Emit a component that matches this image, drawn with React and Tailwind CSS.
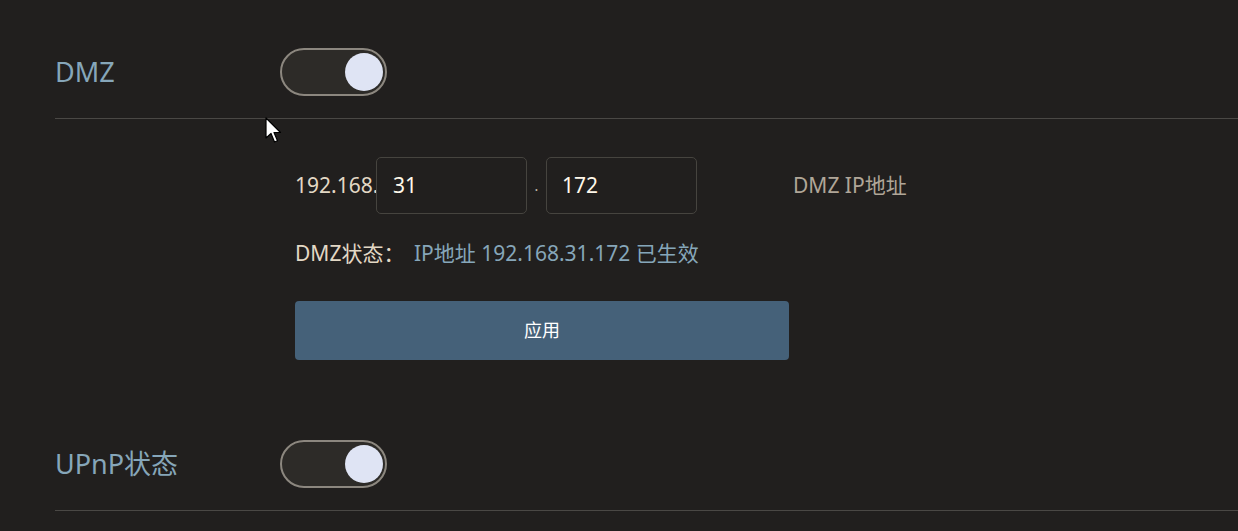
import React from "react";

const FONT = { fontFamily: '"Noto Sans", "Noto Sans CJK SC", sans-serif' };

function Toggle() {
  return (
    <div className="w-[107px] h-[48px] rounded-full border-2 border-[#8c877f] bg-[#2d2b28] flex items-center justify-end pr-[2px]">
      <div className="w-[38px] h-[38px] rounded-full bg-[#dfe4f4]" />
    </div>
  );
}

function SwitchRow({ label }) {
  return (
    <div className="flex items-center h-[48px]">
      <div className="w-[225px] text-[27px] text-[#86a6b9]">{label}</div>
      <Toggle />
    </div>
  );
}

function Cursor() {
  return (
    <svg className="absolute left-[265px] top-[117px]" width="18" height="28" viewBox="0 0 18 28">
      <path d="M1 1 L1 21 L6 16.5 L9.5 25 L12.5 23.8 L9 15.5 L15.5 15.5 Z" fill="#fff" stroke="#000" strokeWidth="1.2" strokeLinejoin="round" />
    </svg>
  );
}

export default function App() {
  return (
    <div className="relative w-[1238px] h-[531px] overflow-hidden bg-[#211f1e]" style={FONT}>
      <div className="pl-[55px] pt-[48px]">
        <SwitchRow label="DMZ" />
        <div className="mt-[22px] border-t border-[#4a4845]" />

        <div className="pl-[240px] pt-[38px]">
          <div className="flex items-center h-[57px]">
            <span className="w-[81px] whitespace-nowrap text-[21px] text-[#e3d8c5]">192.168.</span>
            <div className="relative w-[151px] h-[57px] rounded-[5px] border border-[#46443f] bg-[#211f1e] flex items-center pl-[16px] text-[21px] text-[#fff8ea]">
              31
            </div>
            <span className="w-[19px] text-center text-[14px] text-[#c8c0b0]">.</span>
            <div className="w-[151px] h-[57px] rounded-[5px] border border-[#46443f] flex items-center pl-[15px] text-[21px] text-[#fff8ea]">
              172
            </div>
            <span className="ml-[96px] text-[21px] text-[#b0a698]">DMZ IP地址</span>
          </div>

          <div className="mt-[27px] h-[26px] flex items-center text-[21px]">
            <span className="w-[119px] whitespace-nowrap text-[#e3d8c5]">DMZ状态：</span>
            <span className="text-[#86a6b9]">IP地址 192.168.31.172 已生效</span>
          </div>

          <button className="mt-[34px] w-[494px] h-[59px] rounded-[4px] bg-[#456179] text-white text-[18px]">
            应用
          </button>
        </div>

        <div className="mt-[80px]">
          <SwitchRow label="UPnP状态" />
        </div>
        <div className="mt-[22px] border-t border-[#4a4845]" />
      </div>
      <Cursor />
    </div>
  );
}
